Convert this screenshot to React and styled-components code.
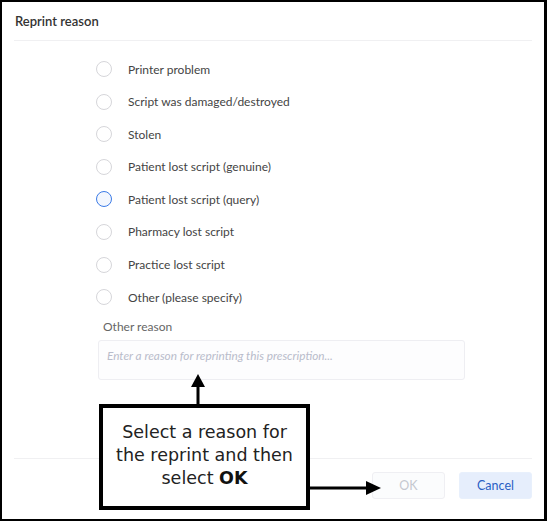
import React from "react";
import styled, { createGlobalStyle } from "styled-components";

const Global = createGlobalStyle`
  html, body { margin: 0; padding: 0; background: #fff; }
  * { box-sizing: border-box; }
`;

const Frame = styled.div`
  position: relative;
  width: 547px;
  height: 521px;
  border: 2px solid #000;
  border-right-width: 3px;
  background: #fff;
  font-family: "Lato", "Noto Sans", sans-serif;
  display: flex;
  flex-direction: column;
  overflow: hidden;
`;

const Header = styled.div`
  margin: 0 12px;
  height: 39px;
  padding: 11px 1px 0;
  border-bottom: 1px solid #f0f0f2;
  font-size: 13px;
  color: #333;
  font-weight: 600;
`;

const Body = styled.div`
  flex: 1;
  padding: 19px 0 0 94px;
  display: flex;
  flex-direction: column;
`;

const RadioList = styled.div`
  display: flex;
  flex-direction: column;
  gap: 14.6px;
`;

const RadioRow = styled.label`
  display: flex;
  align-items: center;
  gap: 16px;
  height: 18px;
  font-size: 12px;
  color: #444;
`;

const Circle = styled.span`
  width: 16px;
  height: 16px;
  border-radius: 50%;
  border: 1.5px solid ${(p) => (p.$active ? "#3c7be6" : "#d6d6da")};
  background: ${(p) => (p.$active ? "#f3f7fe" : "#fff")};
  flex: none;
`;

const FieldLabel = styled.div`
  margin: 13px 0 0 7px;
  font-size: 12px;
  color: #666;
`;

const TextBox = styled.div`
  margin: 6px 0 0 2px;
  width: 367px;
  height: 40px;
  border: 1px solid #eeeef2;
  border-radius: 3px;
  background: #fdfdfe;
  padding: 7px 8px;
  font-size: 11.8px;
  font-style: italic;
  color: #b9bccb;
`;

const Footer = styled.div`
  margin: 0 12px;
  border-top: 1px solid #f0f0f2;
  height: 61px;
  display: flex;
  justify-content: flex-end;
  align-items: flex-start;
  gap: 14px;
  padding: 13px 0 0 0;
`;

const Button = styled.button`
  width: 73px;
  height: 27px;
  border-radius: 3px;
  font-family: inherit;
  font-size: 12.5px;
  border: 1px solid ${(p) => (p.$primary ? "#e8f0fc" : "#efeff3")};
  background: ${(p) => (p.$primary ? "#e6eefc" : "#fbfcfd")};
  color: ${(p) => (p.$primary ? "#2a5fc4" : "#c5c8d0")};
`;

const Callout = styled.div`
  position: absolute;
  left: 97px;
  top: 402px;
  width: 211px;
  height: 106px;
  border: 4px solid #000;
  background: #fff;
  display: flex;
  align-items: center;
  justify-content: center;
  text-align: center;
  font-family: "DejaVu Sans", sans-serif;
  font-weight: 400;
  font-size: 17.5px;
  line-height: 23px;
  color: #222;
  padding-bottom: 3px;

  b { font-weight: 700; color: #111; }
`;

const Arrow = styled.svg`
  position: absolute;
  left: ${(p) => p.$x}px;
  top: ${(p) => p.$y}px;
`;

export default function App() {
  const items = [
    "Printer problem",
    "Script was damaged/destroyed",
    "Stolen",
    "Patient lost script (genuine)",
    "Patient lost script (query)",
    "Pharmacy lost script",
    "Practice lost script",
    "Other (please specify)",
  ];
  return (
    <>
      <Global />
      <Frame>
        <Header>Reprint reason</Header>
        <Body>
          <RadioList>
            {items.map((t, i) => (
              <RadioRow key={t}>
                <Circle $active={i === 4} />
                {t}
              </RadioRow>
            ))}
          </RadioList>
          <FieldLabel>Other reason</FieldLabel>
          <TextBox>Enter a reason for reprinting this prescription...</TextBox>
        </Body>
        <Footer>
          <Button>OK</Button>
          <Button $primary>Cancel</Button>
        </Footer>
        <Arrow $x={186} $y={371} width="20" height="32" viewBox="0 0 20 32">
          <polygon points="10,1 3,14 17,14" fill="#000" />
          <rect x="8.5" y="13" width="3" height="19" fill="#000" />
        </Arrow>
        <Callout>
          <div>
            Select a reason for
            <br />
            the reprint and then
            <br />
            select <b>OK</b>
          </div>
        </Callout>
        <Arrow $x={306} $y={476} width="74" height="20" viewBox="0 0 74 20">
          <rect x="0" y="8.5" width="60" height="3" fill="#000" />
          <polygon points="73,10 58,3 58,17" fill="#000" />
        </Arrow>
      </Frame>
    </>
  );
}
